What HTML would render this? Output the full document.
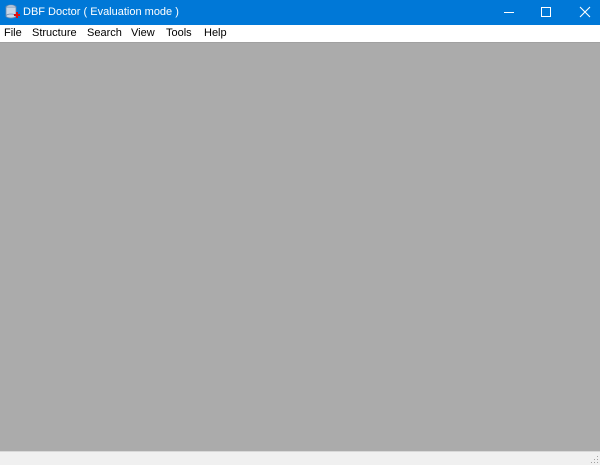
<!DOCTYPE html>
<html><head><style>
*{margin:0;padding:0;box-sizing:border-box}
body{width:600px;height:465px;overflow:hidden;font-family:"Liberation Sans","Noto Sans CJK SC",sans-serif;background:#f0f0f0;position:relative}
.title{position:absolute;left:0;top:0;width:600px;height:25px;background:#0078d7;color:#fff;font-size:11px}
.title .t{position:absolute;left:23px;top:6px}
.menu{position:absolute;left:0;top:25px;width:600px;height:17px;background:#fff;font-size:11px;color:#000}
.menu span{position:absolute;top:2px}
.main{position:absolute;left:0;top:42px;width:600px;height:409px;background:#ababab;border-top:1px solid #a0a0a0}
.status{position:absolute;left:0;top:451px;width:600px;height:14px;background:#f0f0f0;border-top:1px solid #d8d8d8}
</style></head><body>
<div class="title">
<svg style="position:absolute;left:4px;top:4px" width="16" height="16" viewBox="0 0 16 16">
<ellipse cx="7" cy="3" rx="5" ry="2" fill="#dde6f0" stroke="#6b8bb0" stroke-width="0.8"/>
<rect x="2" y="3" width="10" height="9" fill="#c8d6e6" stroke="#6b8bb0" stroke-width="0.8"/>
<ellipse cx="7" cy="12" rx="5" ry="2" fill="#c8d6e6" stroke="#6b8bb0" stroke-width="0.8"/>
<path d="M10 11h6M13 8v6" stroke="#e01010" stroke-width="2"/>
</svg>
<span class="t">DBF Doctor ( Evaluation mode )</span>
<svg style="position:absolute;left:480px;top:0" width="120" height="25" viewBox="0 0 120 25">
<path d="M24 12.5h10" stroke="#fff" stroke-width="1"/>
<rect x="61.5" y="7.5" width="9" height="9" fill="none" stroke="#fff" stroke-width="1"/>
<path d="M100 7l10 10M110 7l-10 10" stroke="#fff" stroke-width="1.1"/>
</svg>
</div>
<div class="menu">
<span style="left:4px">File</span>
<span style="left:32px">Structure</span>
<span style="left:87px">Search</span>
<span style="left:131px">View</span>
<span style="left:166px">Tools</span>
<span style="left:204px">Help</span>
</div>
<div class="main"></div>
<div class="status">
<svg style="position:absolute;right:1px;bottom:1px" width="8" height="8"><g fill="#a0a0a0"><rect x="6" y="0" width="1" height="1"/><rect x="6" y="3" width="1" height="1"/><rect x="3" y="3" width="1" height="1"/><rect x="6" y="6" width="1" height="1"/><rect x="3" y="6" width="1" height="1"/><rect x="0" y="6" width="1" height="1"/></g></svg>
</div>
</body></html>
